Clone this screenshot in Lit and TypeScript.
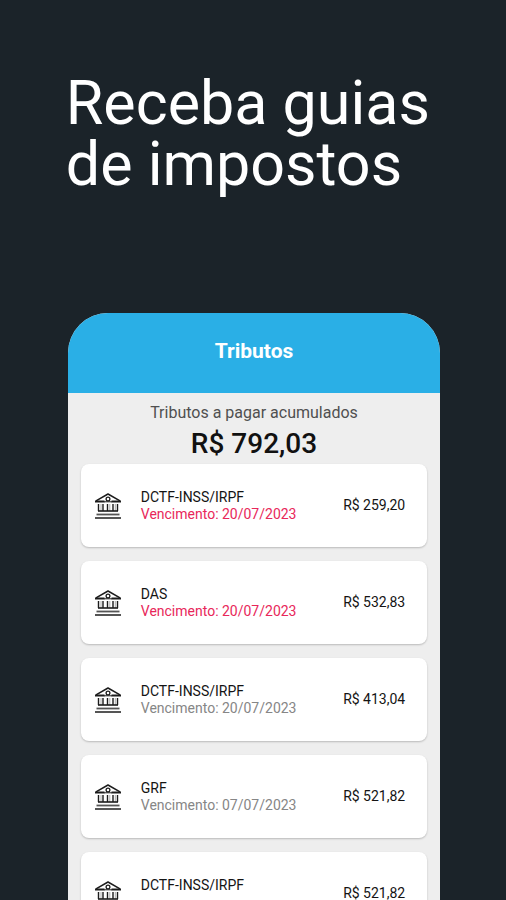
import { LitElement, html, css, nothing } from "lit";
import { customElement, property } from "lit/decorators.js";
import { classMap } from "lit/directives/class-map.js";

interface Tax {
  name: string;
  due?: string;
  amount: string;
  late: boolean;
}

const TAXES: Tax[] = [
  { name: "DCTF-INSS/IRPF", due: "20/07/2023", amount: "R$ 259,20", late: true },
  { name: "DAS", due: "20/07/2023", amount: "R$ 532,83", late: true },
  { name: "DCTF-INSS/IRPF", due: "20/07/2023", amount: "R$ 413,04", late: false },
  { name: "GRF", due: "07/07/2023", amount: "R$ 521,82", late: false },
  { name: "DCTF-INSS/IRPF", amount: "R$ 521,82", late: false },
];

@customElement("tax-card")
export class TaxCard extends LitElement {
  @property({ attribute: false }) tax!: Tax;

  static styles = css`
    :host {
      display: block;
    }
    .card {
      box-sizing: border-box;
      min-height: 83px;
      display: flex;
      align-items: center;
      padding: 0 22px 0 14px;
      border-radius: 8px;
      background: #fff;
      box-shadow: 0 1px 2px rgba(0, 0, 0, 0.22);
    }
    .icon {
      flex: none;
      width: 26px;
      height: 26px;
      margin-right: 20px;
    }
    .info {
      flex: 1;
      min-width: 0;
    }
    .name,
    .due {
      margin: 0;
      min-height: 17px;
      font-size: 14px;
      line-height: 17px;
      white-space: nowrap;
    }
    .name {
      color: #141414;
    }
    .due {
      color: #868686;
    }
    .late {
      color: #e8275a;
    }
    .amount {
      font-size: 14px;
      line-height: 17px;
      color: #141414;
      white-space: nowrap;
    }
  `;

  render() {
    const { name, due, amount, late } = this.tax;
    return html`
      <article class="card">
        <svg class="icon" viewBox="0 0 26 26" fill="none" stroke="#1c1c1c" aria-hidden="true">
          <path d="M1 7.8L13 1l12 6.8" stroke-width="1.5" stroke-linejoin="round" />
          <path d="M0 8.5h9.5M16.5 8.5H26" stroke-width="2" />
          <path d="M9 8.8h8" stroke-width="1" />
          <circle cx="13" cy="6" r="1.9" stroke-width="1.3" />
          <path d="M3.5 11v7M8 11v7M12.5 11v7M18 11v7M22.5 11v7" stroke-width="1.4" />
          <path d="M6 11v7M14.8 11v7M20.3 11v7" stroke="#999" stroke-width="0.8" />
          <path d="M3 18h20" stroke-width="1.6" />
          <path d="M1.5 21.5h23" stroke-width="1.8" stroke="#555" />
          <path d="M0 25h26" stroke-width="2" stroke="#555" />
        </svg>
        <div class="info">
          <p class="name">${name}</p>
          <p class=${classMap({ due: true, late })}>${due ? `Vencimento: ${due}` : nothing}</p>
        </div>
        <span class="amount">${amount}</span>
      </article>
    `;
  }
}

@customElement("app-root")
export class AppRoot extends LitElement {
  static styles = css`
    :host {
      display: block;
      box-sizing: border-box;
      height: 100vh;
      overflow: hidden;
      padding: 73px 13% 0;
      background: #1b2329;
      font-family: Roboto, "Liberation Sans", sans-serif;
    }
    .headline {
      margin: 0 0 118px;
      font-size: 61px;
      font-weight: 400;
      line-height: 61px;
      color: #fff;
      white-space: nowrap;
    }
    .phone {
      margin: 0 0 0 2px;
      border-radius: 40px 40px 0 0;
      overflow: hidden;
      background: #eee;
    }
    .bar {
      display: flex;
      align-items: center;
      justify-content: center;
      height: 80px;
      background: #2aafe6;
    }
    .title {
      margin: 0 0 4px;
      font-size: 21px;
      font-weight: 700;
      line-height: 24px;
      color: #fff;
    }
    .summary {
      padding: 10px 0 4px;
      text-align: center;
    }
    .label {
      margin: 0;
      font-size: 16px;
      line-height: 20px;
      color: #505050;
    }
    .total {
      margin: 5px 0 0;
      font-size: 28px;
      font-weight: 500;
      line-height: 32px;
      color: #111;
    }
    .list {
      margin: 0;
      padding: 0 13px 14px;
      display: grid;
      gap: 14px;
      list-style: none;
    }
  `;

  render() {
    return html`
      <h1 class="headline">Receba guias<br />de impostos</h1>
      <main class="phone">
        <header class="bar"><h2 class="title">Tributos</h2></header>
        <section class="summary">
          <p class="label">Tributos a pagar acumulados</p>
          <p class="total">R$ 792,03</p>
        </section>
        <ul class="list">
          ${TAXES.map((tax) => html`<li><tax-card .tax=${tax}></tax-card></li>`)}
        </ul>
      </main>
    `;
  }
}
